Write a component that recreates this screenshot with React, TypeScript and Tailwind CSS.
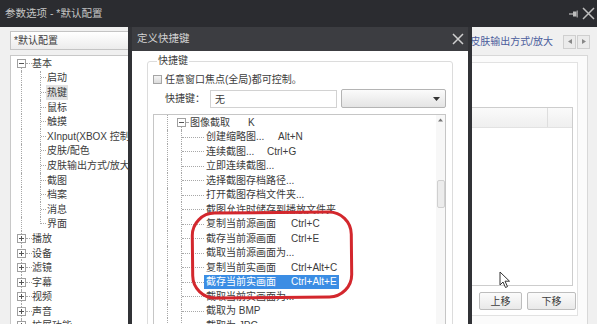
import React from "react";

const FONT = "font-['Liberation_Sans','Noto_Sans_CJK_SC',sans-serif]";

/** +/- box used by both tree views */
function Expander({ open }: { open: boolean }) {
  return (
    <svg width="9" height="9" viewBox="0 0 9 9" className="relative">
      <rect x="0.5" y="0.5" width="8" height="8" fill="#fff" stroke="#a0a0a0" />
      <line x1="2" y1="4.5" x2="7" y2="4.5" stroke="#555" />
      {!open && <line x1="4.5" y1="2" x2="4.5" y2="7" stroke="#555" />}
    </svg>
  );
}

const basicChildren = [
  "启动",
  "热键",
  "鼠标",
  "触摸",
  "XInput(XBOX 控制器)",
  "皮肤/配色",
  "皮肤输出方式/放大",
  "截图",
  "档案",
  "消息",
  "界面",
];

const otherRoots = ["播放", "设备", "滤镜", "字幕", "视频", "声音", "扩展功能"];

interface Shortcut {
  name: string;
  keys?: string;
  /** width of the name column, so keys line up like tab stops */
  nameCls?: string;
  selected?: boolean;
}

const captureItems: Shortcut[] = [
  { name: "创建缩略图...", keys: "Alt+N", nameCls: "w-[72px]" },
  { name: "连续截图...", keys: "Ctrl+G", nameCls: "w-[61px]" },
  { name: "立即连续截图..." },
  { name: "选择截图存档路径..." },
  { name: "打开截图存档文件夹..." },
  { name: "截图允许时储存到播放文件夹" },
  { name: "复制当前源画面", keys: "Ctrl+C", nameCls: "w-[85px]" },
  { name: "截存当前源画面", keys: "Ctrl+E", nameCls: "w-[85px]" },
  { name: "截取当前源画面为..." },
  { name: "复制当前实画面", keys: "Ctrl+Alt+C", nameCls: "w-[85px]" },
  { name: "截存当前实画面", keys: "Ctrl+Alt+E", nameCls: "w-[85px]", selected: true },
  { name: "截取当前实画面为..." },
  { name: "截取为 BMP" },
  { name: "截取为 JPG" },
];

function LeftTree() {
  return (
    <div className="mt-[5px] h-[300px] border border-[#c8c8c8] bg-white">
      {/* 基本 (expanded) */}
      <div className="flex h-[14.6px] items-center">
        <span className="w-[6px]" />
        <span className="relative flex w-[9px] items-center justify-center self-stretch">
          <span className="absolute left-[4px] top-1/2 bottom-0 border-l border-dotted border-[#a8a8a8]" />
          <Expander open />
        </span>
        <span className="w-[6px] border-t border-dotted border-[#a8a8a8]" />
        <span>基本</span>
      </div>
      {basicChildren.map((c, i) => (
        <div key={c} className="flex h-[14.6px] items-center">
          <span className="w-[11px] self-stretch border-r border-dotted border-[#a8a8a8]" />
          <span className="relative w-[19px] self-stretch">
            <span
              className={
                i === basicChildren.length - 1
                  ? "absolute right-0 top-0 h-1/2 border-r border-dotted border-[#a8a8a8]"
                  : "absolute right-0 top-0 bottom-0 border-r border-dotted border-[#a8a8a8]"
              }
            />
          </span>
          <span className="w-[5px] border-t border-dotted border-[#a8a8a8]" />
          <span className={c === "热键" ? "whitespace-nowrap bg-[#e2e2e2] px-[1px]" : "whitespace-nowrap px-[1px]"}>{c}</span>
        </div>
      ))}
      {otherRoots.map((r) => (
        <div key={r} className="flex h-[14.6px] items-center">
          <span className="w-[6px]" />
          <span className="relative flex w-[9px] items-center justify-center self-stretch">
            <span className="absolute left-[4px] top-0 bottom-0 border-l border-dotted border-[#a8a8a8]" />
            <Expander open={false} />
          </span>
          <span className="w-[6px] border-t border-dotted border-[#a8a8a8]" />
          <span>{r}</span>
        </div>
      ))}
    </div>
  );
}

function ShortcutTree() {
  return (
    <div className="mt-[6px] flex h-[220px] w-[293px] border border-[#c6c6c6] bg-white">
      <div className="flex-1">
        {/* 图像截取 root */}
        <div className="flex h-[14.5px] items-center">
          <span className="w-[14px] self-stretch border-r border-dotted border-[#a8a8a8]" />
          <span className="w-[9px]" />
          <span className="relative flex w-[9px] items-center justify-center self-stretch">
            <span className="absolute left-[4px] top-1/2 bottom-0 border-l border-dotted border-[#a8a8a8]" />
            <Expander open />
          </span>
          <span className="w-[2px] border-t border-dotted border-[#a8a8a8]" />
          <span className="flex px-[2px]">
            <span className="w-[58px]">图像截取</span>
            <span>K</span>
          </span>
        </div>
        {captureItems.map((it) => (
          <div key={it.name} className="flex h-[14.5px] items-center">
            <span className="w-[14px] self-stretch border-r border-dotted border-[#a8a8a8]" />
            <span className="w-[14px] self-stretch border-r border-dotted border-[#a8a8a8]" />
            <span className="w-[22px] border-t border-dotted border-[#a8a8a8]" />
            <span
              className={
                it.selected
                  ? "flex whitespace-nowrap bg-[#3b8de4] px-[2px] leading-[14px] text-white"
                  : "flex whitespace-nowrap px-[2px] leading-[14px]"
              }
            >
              <span className={it.nameCls}>{it.name}</span>
              {it.keys && <span>{it.keys}</span>}
            </span>
          </div>
        ))}
      </div>
      {/* vertical scrollbar */}
      <div className="flex w-[9px] flex-col items-center bg-[#f7f7f7]">
        <svg width="9" height="11" viewBox="0 0 9 11">
          <path d="M2 6.5 L4.5 3.5 L7 6.5 Z" fill="#777" />
        </svg>
        <div className="mt-[54px] h-[28px] w-[8px] rounded-[2px] border border-[#d0d0d0] bg-[#ececec]" />
      </div>
    </div>
  );
}

function Dialog() {
  return (
    <div className="absolute left-[128px] top-[27px] flex h-[310px] w-[344px] flex-col border-x-4 border-[#313236] bg-white">
      <div className="flex h-[26px] items-center justify-between bg-[#3c3d41] pl-[5px] pr-[4px]">
        <span className="text-[10.5px] text-[#d4d4d4]">定义快捷键</span>
        <svg width="12" height="12" viewBox="0 0 12 12">
          <path d="M1 1 L11 11 M11 1 L1 11" stroke="#cfcfcf" strokeWidth="1.5" />
        </svg>
      </div>
      <fieldset className="mx-[15px] mt-[3px] h-[300px] rounded-[3px] border border-[#dcdcdc] pl-[5px]">
        <legend className="ml-[4px] px-[1px] leading-[14px]">快捷键</legend>
        <div className="mt-[4px] flex h-[14px] items-center gap-[3px]">
          <span className="h-[9px] w-[9px] border border-[#a5a5a5] bg-gradient-to-b from-[#f4f4f4] to-[#dcdcdc]" />
          <span>任意窗口焦点(全局)都可控制。</span>
        </div>
        <div className="mt-[3px] flex h-[19px] items-stretch">
          <span className="flex w-[57px] items-center pl-[12px]">快捷键：</span>
          <span className="mt-[1px] flex w-[127px] items-center border border-[#d2d2d2] bg-white pl-[4px]">无</span>
          <span className="ml-[4px] flex w-[105px] items-center justify-end rounded-[2px] border border-[#b4b4b4] bg-gradient-to-b from-[#fbfbfb] to-[#e4e4e4] pr-[5px]">
            <svg width="7" height="4" viewBox="0 0 7 4">
              <path d="M0 0 H7 L3.5 4 Z" fill="#333" />
            </svg>
          </span>
        </div>
        <ShortcutTree />
      </fieldset>
    </div>
  );
}

export default function App() {
  return (
    <div className={`relative h-[324px] w-[597px] overflow-hidden bg-[#f0f0f0] text-[10px] text-[#3c3c3c] ${FONT}`}>
      {/* main window title bar */}
      <div className="flex h-[27px] items-center justify-between bg-[#2b2c30] pl-[5px] pr-[2px]">
        <span className="text-[10.5px] text-[#c6c6c6]">参数选项 - *默认配置</span>
        <div className="flex items-center gap-[4px]">
          <svg width="9" height="8" viewBox="0 0 9 8">
            <path d="M0 4 H4" stroke="#bdbdbd" strokeWidth="1.2" />
            <rect x="4" y="1.5" width="3.5" height="5" fill="#bdbdbd" />
            <path d="M8.2 0.5 V7.5" stroke="#bdbdbd" strokeWidth="1" />
          </svg>
          <svg width="13" height="13" viewBox="0 0 13 13">
            <path d="M1 1 L12 12 M12 1 L1 12" stroke="#bdbdbd" strokeWidth="1.5" />
          </svg>
        </div>
      </div>

      {/* main window body */}
      <div className="flex pt-[4px]">
        <div className="ml-[10px] flex w-[200px] flex-col">
          <div className="flex h-[19px] items-center border border-[#c4c4c4] bg-gradient-to-b from-white to-[#ececec] pl-[3px]">
            *默认配置
          </div>
          <LeftTree />
        </div>

        <div className="flex flex-1 flex-col">
          <div className="flex h-[21px] items-center justify-end pr-[7px]">
            <span className="text-[#4a5c9c]">皮肤输出方式/放大</span>
            <div className="ml-[10px] flex gap-[1px]">
              <span className="flex h-[14px] w-[13px] items-center justify-center border border-[#cfcfcf] bg-[#ebebeb]">
                <svg width="4" height="5" viewBox="0 0 4 5">
                  <path d="M4 0 V5 L0 2.5 Z" fill="#888" />
                </svg>
              </span>
              <span className="flex h-[14px] w-[13px] items-center justify-center border border-[#cfcfcf] bg-[#ebebeb]">
                <svg width="4" height="5" viewBox="0 0 4 5">
                  <path d="M0 0 V5 L4 2.5 Z" fill="#888" />
                </svg>
              </span>
            </div>
          </div>
          <div className="mr-[9px] mt-[3px] h-[290px] border border-[#d8d8d8] bg-[#fbfbfb]">
            <div className="mr-[9px] mt-[6px] h-[254px] border border-[#e2e2e2] bg-white">
              <div className="mr-[4px] mt-[44px] flex h-[179px] flex-col border border-[#cdcdcd] bg-white">
                <div className="flex h-[20px] border-b border-[#e2e2e2] bg-gradient-to-b from-[#fafafa] to-[#efefef]">
                  <span className="flex-1" />
                  <span className="w-[25px] border-l border-[#dedede]" />
                </div>
              </div>
              <div className="mr-[1px] mt-[6px] flex justify-end gap-[5px]">
                <span className="flex h-[18px] w-[43px] items-center justify-center rounded-[2px] border border-[#bdbdbd] bg-gradient-to-b from-[#fbfbfb] to-[#e9e9e9]">
                  上移
                </span>
                <span className="flex h-[18px] w-[49px] items-center justify-center rounded-[2px] border border-[#bdbdbd] bg-gradient-to-b from-[#fbfbfb] to-[#e9e9e9]">
                  下移
                </span>
              </div>
            </div>
          </div>
        </div>
      </div>

      <Dialog />

      {/* red annotation ring */}
      <div className="absolute left-[191px] top-[211px] h-[88px] w-[162px] rotate-[-0.6deg] rounded-[24px] border-[3px] border-[#d3272d]" />

      {/* mouse pointer */}
      <svg className="absolute left-[499px] top-[271px]" width="12" height="18" viewBox="0 0 12 18">
        <path d="M1 1 L1 14 L4 11 L6.5 16.5 L8.5 15.6 L6 10.2 L10.5 10.2 Z" fill="#fff" stroke="#333" strokeWidth="1" strokeLinejoin="round" />
      </svg>
    </div>
  );
}
